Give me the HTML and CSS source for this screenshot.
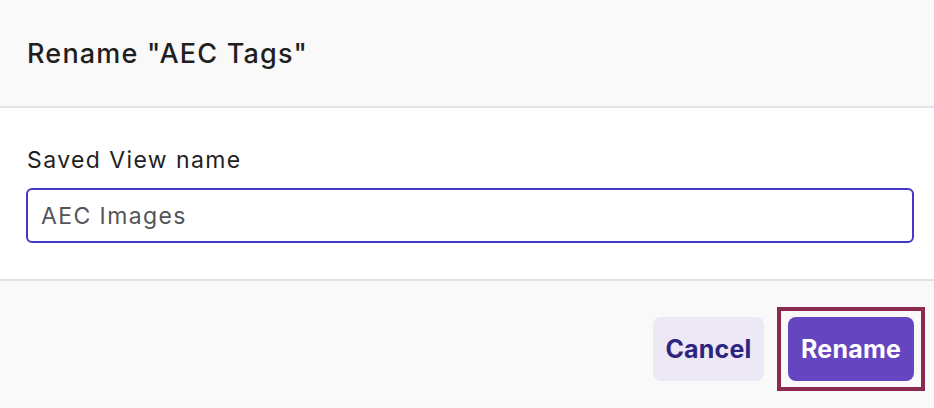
FILE: index.html
```html
<!DOCTYPE html>
<html lang="en">
<head>
<meta charset="utf-8">
<title>Rename</title>
<link rel="stylesheet" href="styles.css">
</head>
<body>
<div class="dialog">
  <div class="dialog-header">
    <h2 class="dialog-title">Rename "AEC Tags"</h2>
  </div>
  <div class="dialog-body">
    <label class="field-label" for="name">Saved View name</label>
    <input class="field-input" id="name" type="text" value="AEC Images">
  </div>
  <div class="dialog-footer">
    <button class="btn btn-secondary" type="button">Cancel</button>
    <span class="focus-ring"><button class="btn btn-primary" type="button">Rename</button></span>
  </div>
</div>
</body>
</html>
```

FILE: styles.css
```css
* { box-sizing: border-box; }
html, body { margin: 0; padding: 0; }
body {
  font-family: Inter, "Noto Sans", sans-serif;
  background: #f9f9f9;
  color: #1f1f22;
}
.dialog {
  width: 934px;
}
.dialog-header {
  height: 108px;
  background: #f9f9f9;
  border-bottom: 2px solid #e2e2e6;
  display: flex;
  align-items: center;
  padding: 0 20px 0 27px;
}
.dialog-title {
  margin: 0;
  font-size: 27px;
  font-weight: 500;
  letter-spacing: 1.2px;
  color: #1f1f22;
}
.dialog-body {
  background: #fff;
  padding: 37px 20px 36px 26px;
  border-bottom: 2px solid #e2e2e6;
  display: flex;
  flex-direction: column;
}
.field-label {
  font-size: 23px;
  letter-spacing: 1.4px;
  color: #1f1f22;
  margin-left: 1px;
  line-height: 30px;
  margin-bottom: 13px;
}
.field-input {
  width: 100%;
  height: 55px;
  border: 2px solid #4339c4;
  border-radius: 6px;
  padding: 0 13px;
  font-family: Inter, "Noto Sans", sans-serif;
  font-size: 23px;
  letter-spacing: 1.4px;
  color: #555558;
  outline: none;
  background: #fff;
}
.dialog-footer {
  background: #f9f9f9;
  display: flex;
  justify-content: flex-end;
  align-items: center;
  gap: 13px;
  padding: 26px 9px 20px 26px;
}
.btn {
  height: 64px;
  border: none;
  border-radius: 8px;
  font-family: Inter, "Noto Sans", sans-serif;
  font-size: 25px;
  font-weight: 700;
  letter-spacing: 0.2px;
  padding: 0;
  cursor: pointer;
}
.btn-secondary {
  width: 111px;
  background: #ece8f5;
  color: #2e2580;
}
.focus-ring {
  display: flex;
  border: 4px solid #8b2a4e;
  padding: 6px 7px;
}
.btn-primary {
  width: 126px;
  background: #6645c0;
  color: #fff;
}
```
